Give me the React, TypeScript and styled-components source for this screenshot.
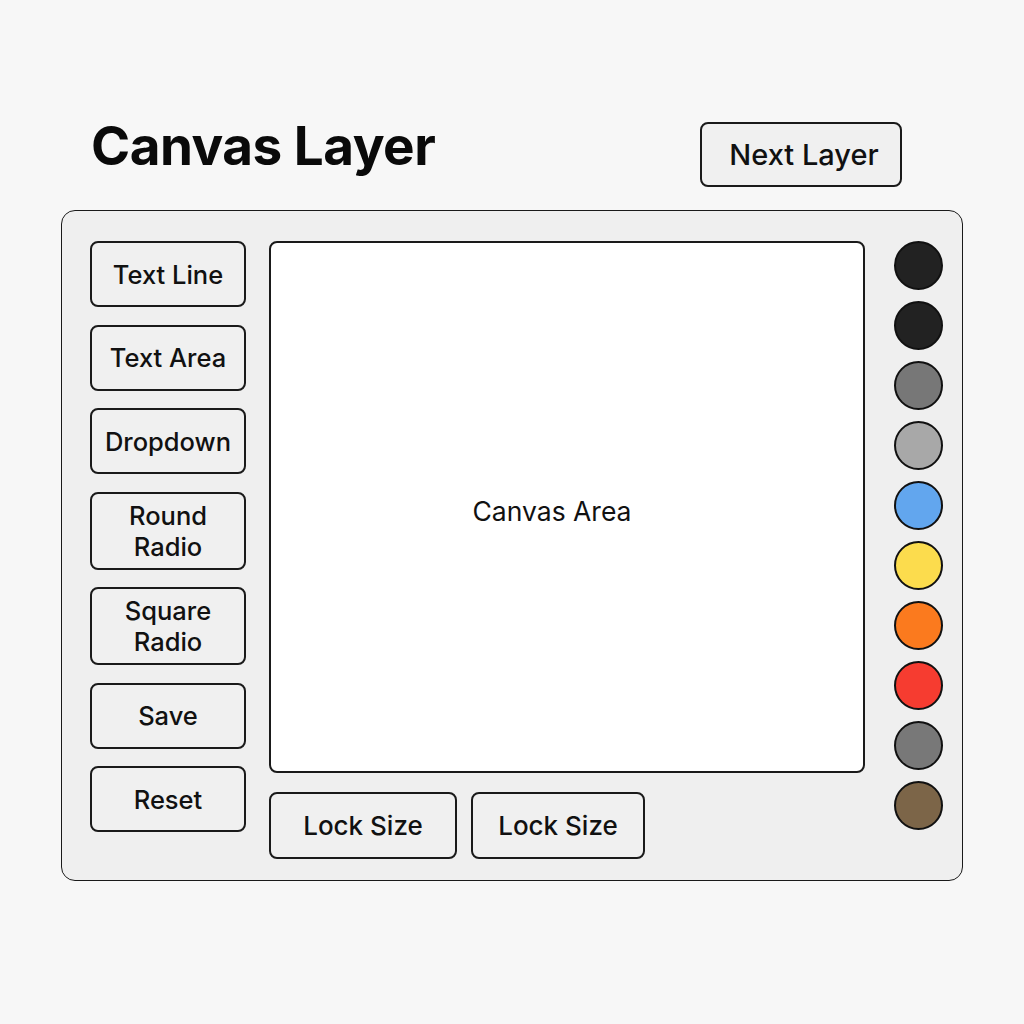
import styled, { createGlobalStyle } from 'styled-components'

const GlobalStyle = createGlobalStyle`
  html, body {
    margin: 0;
    padding: 0;
    background: #f7f7f7;
  }
  body {
    font-family: Inter, "Liberation Sans", sans-serif;
    color: #111;
  }
`

const tools = [
  { label: 'Text Line', tall: false },
  { label: 'Text Area', tall: false },
  { label: 'Dropdown', tall: false },
  { label: 'Round\nRadio', tall: true },
  { label: 'Square\nRadio', tall: true },
  { label: 'Save', tall: false },
  { label: 'Reset', tall: false },
]

const swatches = [
  '#222222',
  '#222222',
  '#777777',
  '#a8a8a8',
  '#62a6ee',
  '#fcdc4d',
  '#fb7a1e',
  '#f63c30',
  '#787878',
  '#7c6548',
]

export default function App() {
  return (
    <>
      <GlobalStyle />
      <Page>
        <Header>
          <Title>Canvas Layer</Title>
          <NextButton>Next Layer</NextButton>
        </Header>
        <Panel>
          <ToolColumn>
            {tools.map((t) => (
              <ToolButton key={t.label} $tall={t.tall}>
                {t.label}
              </ToolButton>
            ))}
          </ToolColumn>
          <CenterColumn>
            <Canvas>Canvas Area</Canvas>
            <LockRow>
              <LockButton $width={188}>Lock Size</LockButton>
              <LockButton $width={174}>Lock Size</LockButton>
            </LockRow>
          </CenterColumn>
          <SwatchColumn>
            {swatches.map((c, i) => (
              <Swatch key={i} $color={c} />
            ))}
          </SwatchColumn>
        </Panel>
      </Page>
    </>
  )
}

const Page = styled.div`
  width: 1024px;
  height: 1024px;
  padding-top: 122px;
  box-sizing: border-box;
`

const Header = styled.div`
  display: flex;
  align-items: flex-start;
  justify-content: space-between;
  padding: 0 122px 0 91px;
  height: 64px;
`

const Title = styled.h1`
  margin: -2px 0 0;
  font-size: 53px;
  line-height: 53px;
  font-weight: 700;
  letter-spacing: -0.5px;
  color: #0a0a0a;
`

const buttonBase = `
  box-sizing: border-box;
  border: 2px solid #1a1a1a;
  border-radius: 8px;
  background: #f0f0f0;
  font-family: Inter, "Liberation Sans", sans-serif;
  color: #111;
  display: flex;
  align-items: center;
  justify-content: center;
  text-align: center;
  padding: 0;
`

const NextButton = styled.button`
  ${buttonBase}
  width: 202px;
  height: 65px;
  font-size: 29px;
  font-weight: 500;
  padding-left: 6px;
`

const Panel = styled.div`
  box-sizing: border-box;
  margin: 24px 61px 0;
  height: 671px;
  border: 1.5px solid #1a1a1a;
  border-radius: 14px;
  background: #efefef;
  padding: 30px 19px 20px 28px;
  display: flex;
`

const ToolColumn = styled.div`
  display: flex;
  flex-direction: column;
  gap: 17.5px;
  width: 156px;
`

const ToolButton = styled.button<{ $tall: boolean }>`
  ${buttonBase}
  width: 156px;
  height: ${({ $tall }) => ($tall ? '78px' : '66px')};
  font-size: 25.5px;
  font-weight: 500;
  line-height: 31px;
  white-space: pre-line;
`

const CenterColumn = styled.div`
  display: flex;
  flex-direction: column;
  margin-left: 23px;
  width: 597px;
`

const Canvas = styled.div`
  box-sizing: border-box;
  height: 532px;
  background: #ffffff;
  border: 2px solid #1a1a1a;
  border-radius: 8px;
  display: flex;
  align-items: center;
  justify-content: center;
  font-size: 26.5px;
  color: #111;
  padding-right: 30px;
  padding-top: 8px;
`

const LockRow = styled.div`
  display: flex;
  gap: 14px;
  margin-top: 19px;
`

const LockButton = styled.button<{ $width: number }>`
  ${buttonBase}
  width: ${({ $width }) => $width}px;
  height: 67px;
  font-size: 26px;
  font-weight: 500;
`

const SwatchColumn = styled.div`
  display: flex;
  flex-direction: column;
  gap: 11px;
  margin-left: 29px;
`

const Swatch = styled.div<{ $color: string }>`
  box-sizing: border-box;
  width: 49px;
  height: 49px;
  border-radius: 50%;
  background: ${({ $color }) => $color};
  border: 2px solid #111;
`
